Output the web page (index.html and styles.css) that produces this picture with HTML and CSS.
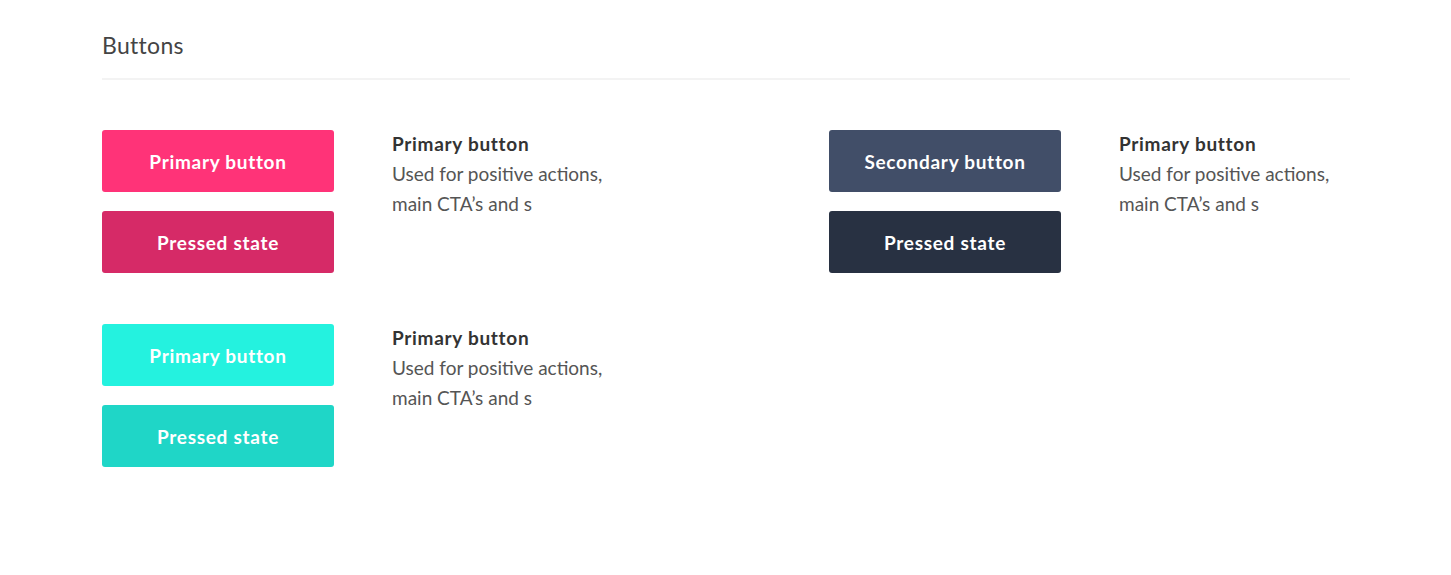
FILE: index.html
```html
<!DOCTYPE html>
<html>
<head>
<meta charset="utf-8">
<link rel="stylesheet" href="styles.css">
</head>
<body>
<div class="page">
  <h2 class="title">Buttons</h2>
  <div class="grid">
    <div class="group">
      <div class="btns">
        <div class="btn pink">Primary button</div>
        <div class="btn pink-pressed">Pressed state</div>
      </div>
      <div class="desc">
        <div class="desc-title">Primary button</div>
        <div>Used for positive actions,</div>
        <div>main CTA’s and s</div>
      </div>
    </div>
    <div class="group">
      <div class="btns">
        <div class="btn navy">Secondary button</div>
        <div class="btn navy-pressed">Pressed state</div>
      </div>
      <div class="desc">
        <div class="desc-title">Primary button</div>
        <div>Used for positive actions,</div>
        <div>main CTA’s and s</div>
      </div>
    </div>
    <div class="group">
      <div class="btns">
        <div class="btn cyan">Primary button</div>
        <div class="btn cyan-pressed">Pressed state</div>
      </div>
      <div class="desc">
        <div class="desc-title">Primary button</div>
        <div>Used for positive actions,</div>
        <div>main CTA’s and s</div>
      </div>
    </div>
  </div>
</div>
</body>
</html>
```
FILE: styles.css
```css
html, body {
  margin: 0;
  padding: 0;
  background: #ffffff;
}
body {
  font-family: "Lato", "Open Sans", sans-serif;
}
.page {
  width: 1248px;
  padding: 30px 0 0 102px;
}
.title {
  margin: 0;
  font-size: 23px;
  letter-spacing: 0.3px;
  font-weight: 400;
  color: #444;
  line-height: 30px;
  padding-bottom: 18px;
  border-bottom: 2px solid #f3f3f3;
}
.grid {
  display: grid;
  grid-template-columns: 727px 1fr;
  row-gap: 51px;
  margin-top: 50px;
}
.group {
  display: flex;
  gap: 58px;
}
.btns {
  display: flex;
  flex-direction: column;
  gap: 19px;
}
.btn {
  width: 232px;
  height: 62px;
  border-radius: 3px;
  color: #fff;
  font-weight: 700;
  font-size: 19px;
  letter-spacing: 0.7px;
  display: flex;
  align-items: center;
  justify-content: center;
}
.pink { background: #ff3378; }
.pink-pressed { background: #d62a67; }
.navy { background: #414e68; }
.navy-pressed { background: #283142; }
.cyan { background: #24f2df; }
.cyan-pressed { background: #1fd6c7; }
.desc {
  font-size: 19px;
  line-height: 30px;
  color: #555;
  margin-top: -1px;
}
.desc-title {
  font-weight: 700;
  color: #333;
  letter-spacing: 0.7px;
}
```
